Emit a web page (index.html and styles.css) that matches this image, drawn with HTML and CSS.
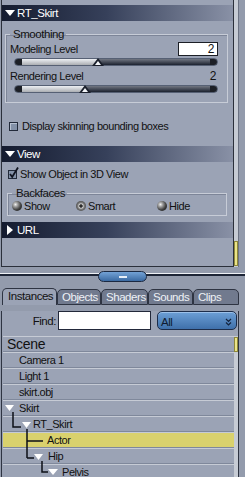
FILE: index.html
```html
<!DOCTYPE html>
<html lang="en">
<head>
    <meta charset="UTF-8">
    <title>Properties</title>
    <link rel="stylesheet" href="styles.css">
</head>
<body>
<div class="top">
    <div class="panel">
        <div class="sec-head"><span class="tri-down"></span>RT_Skirt</div>

        <fieldset class="group smoothing">
            <legend>Smoothing</legend>
            <div class="param">
                <span>Modeling Level</span>
                <span class="num-box">2</span>
            </div>
            <div class="slider" style="--v:41%"></div>
            <div class="param second">
                <span>Rendering Level</span>
                <span class="num">2</span>
            </div>
            <div class="slider" style="--v:34.5%"></div>
        </fieldset>

        <div class="check skin"><span class="box"></span>Display skinning bounding boxes</div>

        <div class="sec-head view"><span class="tri-down"></span>View</div>

        <div class="check show">
            <svg class="box-on" width="12" height="12" viewBox="0 0 12 12">
                <rect x="0.5" y="3.5" width="8" height="8" fill="#8391a8" stroke="#222a3a"/>
                <path d="M2 7 L4.2 10 L10 0.5" fill="none" stroke="#101420" stroke-width="1.8"/>
            </svg>
            Show Object in 3D View
        </div>

        <fieldset class="group backfaces">
            <legend>Backfaces</legend>
            <div class="radios">
                <div class="radio"><span class="dot"></span>Show</div>
                <div class="radio"><span class="dot on"></span>Smart</div>
                <div class="radio"><span class="dot"></span>Hide</div>
            </div>
        </fieldset>

        <div class="sec-head url"><span class="tri-right"></span>URL</div>
    </div>
    <div class="side-scroll"><span class="thumb"></span></div>
</div>

<div class="splitter"><span class="grip"></span></div>

<div class="tabs">
    <div class="tab active w1">Instances</div>
    <div class="tab w2">Objects</div>
    <div class="tab w3">Shaders</div>
    <div class="tab w4">Sounds</div>
    <div class="tab w5">Clips</div>
</div>

<div class="bottom">
    <div class="find-row">
        <span class="find-label">Find:</span>
        <span class="find-input"></span>
        <div class="select">
            <span>All</span>
            <svg width="7" height="8" viewBox="0 0 7 8">
                <path d="M1 1 L3.5 3.5 L6 1 M1 4.5 L3.5 7 L6 4.5" fill="none" stroke="#14233d" stroke-width="1.2"/>
            </svg>
        </div>
    </div>

    <div class="list">
        <div class="rows">
            <div class="row scene">Scene</div>
            <div class="row l0">Camera 1</div>
            <div class="row l0">Light 1</div>
            <div class="row l0">skirt.obj</div>
            <div class="row l0">Skirt</div>
            <div class="row l1">RT_Skirt</div>
            <div class="row l2 sel">Actor</div>
            <div class="row l2b">Hip</div>
            <div class="row l3">Pelvis</div>

            <svg class="tree-lines" width="60" height="144" viewBox="0 0 60 144">
                <g fill="#fff">
                    <polygon points="2,69 11,69 6.5,75"/>
                    <polygon points="19,86 28,86 23.5,92"/>
                    <polygon points="31,118 40,118 35.5,124"/>
                    <polygon points="45,133 55,133 50,139"/>
                </g>
                <path d="M10 76 V91 H18 M24 93 V122 M24 105 H40 M24 122 H31 M39 125 V136 H45"
                      fill="none" stroke="#0c0f16" stroke-width="1.5"/>
            </svg>
        </div>
        <div class="list-scroll"><span class="thumb"></span></div>
    </div>
</div>
</body>
</html>
```

FILE: styles.css
```css
* {
    box-sizing: border-box;
    margin: 0;
    padding: 0;
}

body {
    font-family: "Liberation Sans", Arial, sans-serif;
    font-size: 11px;
    letter-spacing: -0.45px;
    color: #111;
    background: #939bac;
    width: 245px;
    height: 477px;
    overflow: hidden;
}

/* upper properties panel */

.top {
    display: flex;
    height: 267px;
    padding-left: 1px;
}

.panel {
    width: 233px;
    background: #9ba3b5;
    border: 1px solid #2b303b;
    border-top: none;
    padding-top: 5px;
}

.side-scroll {
    width: 5px;
    background: #c6cbd4;
    border-right: 1px solid #6b7283;
    display: flex;
    flex-direction: column;
    justify-content: flex-end;
    padding-bottom: 1px;
}

.side-scroll .thumb,
.list-scroll .thumb {
    display: block;
    background: #ebe488;
    border: 1px solid #8d873a;
}

.side-scroll .thumb {
    height: 25px;
}

.sec-head {
    display: flex;
    align-items: center;
    gap: 2px;
    height: 16px;
    padding-left: 3px;
    color: #fff;
    font-size: 11.5px;
    background: linear-gradient(90deg, #151c30, #36405a 45%, #8991a6);
}

.sec-head.view {
    margin-top: 13px;
}

.sec-head.url {
    margin-top: 6px;
}

.tri-down {
    width: 0;
    height: 0;
    border-left: 5px solid transparent;
    border-right: 5px solid transparent;
    border-top: 6px solid #fff;
}

.tri-right {
    width: 0;
    height: 0;
    margin: 0 2px 0 2px;
    border-top: 5px solid transparent;
    border-bottom: 5px solid transparent;
    border-left: 6px solid #fff;
}

.group {
    border: 1px solid #c7ccd7;
    box-shadow: inset 1px 1px 0 #7d8598;
}

.group legend {
    font-size: 11.5px;
    line-height: 14px;
    padding: 0 2px 0 3px;
}

.smoothing {
    margin: 6px 5px 0 3px;
    padding: 0 9px 9px 4px;
}

.param {
    display: flex;
    justify-content: space-between;
    align-items: center;
    height: 14px;
    margin-top: 1px;
}

.param.second {
    margin-top: 3px;
}

.num-box {
    width: 40px;
    height: 14px;
    background: #fff;
    border: 1px solid #1c1f26;
    text-align: right;
    padding-right: 3px;
    line-height: 12px;
    font-size: 12px;
}

.num {
    padding-right: 2px;
    font-size: 12px;
}

.slider {
    position: relative;
    height: 8px;
    margin: 2px 0 0 4px;
    border-radius: 4px;
    border: 1px solid #566074;
    background:
        linear-gradient(90deg, #1c1f26 0 7px, transparent 7px calc(100% - 7px), #1c1f26 calc(100% - 7px)),
        linear-gradient(rgba(255, 255, 255, 0.35), rgba(0, 0, 0, 0.25)),
        linear-gradient(90deg, #e4e8ee 0 var(--v), #252d3f var(--v));
}

.slider::before,
.slider::after {
    content: "";
    position: absolute;
    bottom: -1px;
    width: 0;
    height: 0;
}

.slider::before {
    left: calc(var(--v) - 6px);
    border-left: 6px solid transparent;
    border-right: 6px solid transparent;
    border-bottom: 8px solid #1a1f2b;
}

.slider::after {
    left: calc(var(--v) - 3px);
    bottom: 0;
    border-left: 3px solid transparent;
    border-right: 3px solid transparent;
    border-bottom: 4px solid #f4f6fa;
}

.check {
    display: flex;
    align-items: center;
    height: 14px;
}

.check.skin {
    gap: 4px;
    margin: 16px 0 0 7px;
}

.check.show {
    margin: 5px 0 0 6px;
}

.box {
    width: 9px;
    height: 9px;
    border: 1px solid #222a3a;
    background: #8391a8;
    box-shadow: inset 1px 1px 0 #b8c2d2;
}

.box-on {
    margin-top: -3px;
}

.backfaces {
    margin: 5px 6px 0 5px;
    padding: 0 4px 3px 4px;
}

.backfaces legend {
    padding: 0 2px 0 4px;
}

.radios {
    display: grid;
    grid-template-columns: 64px 81px auto;
    align-items: center;
    height: 12px;
}

.radio {
    display: flex;
    align-items: center;
    gap: 2px;
}

.dot {
    width: 10px;
    height: 10px;
    border-radius: 50%;
    background: radial-gradient(circle at 35% 35%, #f2f2f2 0, #9c9c9c 25%, #3c3c3c 60%, #161616 100%);
}

.dot.on {
    background: radial-gradient(circle at 50% 50%, #2a2a2a 0 18%, #c8c8c8 30%, #777 50%, #1c1c1c 100%);
}

/* splitter between panels */

.splitter {
    height: 21px;
    display: flex;
    justify-content: center;
    align-items: flex-start;
    background: linear-gradient(#939bac 0 6px, #eef1f6 6px 7px, #1d2536 7px 9px, #939bac 9px);
}

.grip {
    display: flex;
    justify-content: center;
    align-items: center;
    width: 49px;
    height: 11px;
    margin-top: 4px;
    border-radius: 6px;
    border: 1px solid #1b2942;
    background: linear-gradient(#73a2d6, #3b6aa2);
}

.grip::after {
    content: "";
    width: 8px;
    height: 2px;
    background: #e6eef8;
}

/* tabs */

.tabs {
    display: flex;
    align-items: flex-end;
    height: 17px;
    padding-left: 2px;
}

.tab {
    height: 16px;
    padding-left: 4px;
    line-height: 15px;
    font-size: 11.5px;
    color: #eef1f6;
    background: #717a8e;
    border: 1px solid #2e3442;
    border-radius: 5px 5px 0 0;
    white-space: nowrap;
}

.tab.active {
    height: 17px;
    padding-left: 5px;
    color: #111;
    background: #9ba3b5;
    border-bottom: none;
}

.w1 { width: 55px; }
.w2 { width: 44px; }
.w3 { width: 47px; }
.w4 { width: 45px; }
.w5 { width: 46px; }

/* lower instances panel */

.bottom {
    margin-left: 1px;
    width: 238px;
    height: 172px;
    background: #9ba3b5;
    border-left: 1px solid #2e3442;
    border-right: 1px solid #2e3442;
}

.find-row {
    display: flex;
    align-items: center;
    height: 19px;
    margin-top: 6px;
}

.find-label {
    width: 54px;
    text-align: right;
    font-size: 11.5px;
}

.find-input {
    width: 93px;
    height: 19px;
    margin-left: 2px;
    background: #fff;
    border: 1px solid #22283a;
}

.select {
    display: flex;
    align-items: center;
    justify-content: space-between;
    width: 80px;
    height: 19px;
    margin-left: 6px;
    padding: 2px 4px 0 3px;
    font-size: 11.5px;
    color: #0f1b30;
    border: 1px solid #1d2d4a;
    border-radius: 5px;
    background: linear-gradient(#6c9fd6, #3f70aa);
    box-shadow: inset 0 1px 0 #9cc1ea;
}

.list {
    display: flex;
    margin: 6px 0 0 1px;
}

.rows {
    position: relative;
    width: 231px;
}

.row {
    height: 16px;
    line-height: 14px;
    padding-left: 16px;
    border-top: 1px solid #c6cbd5;
    border-bottom: 1px solid #7f889b;
}

.row.scene {
    font-size: 14px;
    letter-spacing: -0.3px;
    padding-left: 4px;
}

.row.l1 { padding-left: 30px; }
.row.l2 { padding-left: 44px; }
.row.l2b { padding-left: 45px; }
.row.l3 { padding-left: 59px; }

.row.sel {
    background: #d9d16d;
}

.tree-lines {
    position: absolute;
    left: 0;
    top: 0;
}

.list-scroll {
    width: 4px;
    background: #c6cbd4;
}

.list-scroll .thumb {
    height: 15px;
    margin-top: 1px;
}
```
